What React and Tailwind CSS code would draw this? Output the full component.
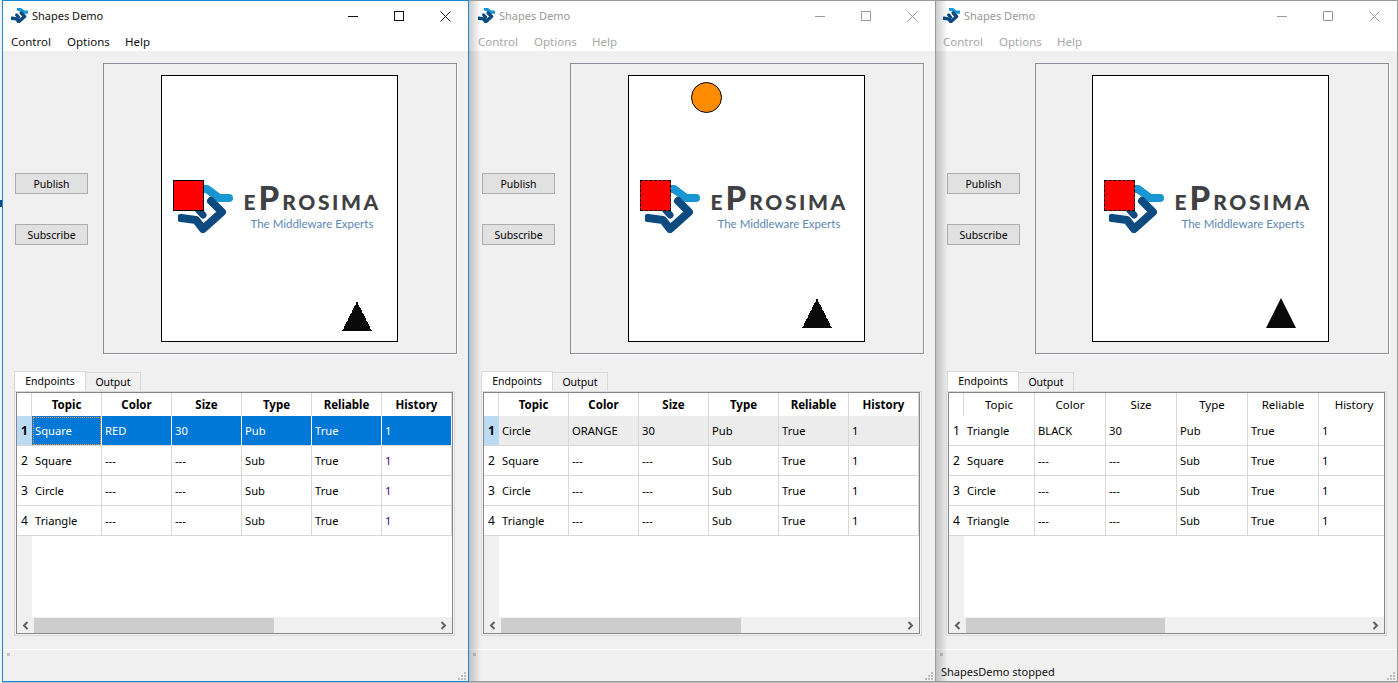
import React from "react";

const FONT = "font-['Noto_Sans','Liberation_Sans',sans-serif]";

const rowsFor = (first) => [
  { topic: first.topic, color: first.color, size: "30", type: "Pub" },
  { topic: "Square", color: "---", size: "---", type: "Sub" },
  { topic: "Circle", color: "---", size: "---", type: "Sub" },
  { topic: "Triangle", color: "---", size: "---", type: "Sub" },
];

function Mark({ className, weight = 8 }) {
  return (
    <svg viewBox="0 0 55 48" className={className} fill="none" strokeLinejoin="round" strokeLinecap="round">
      <path d="M24 4 L29 4 L41 13 L51 13" stroke="#1796d2" strokeWidth={weight} />
      <path d="M33 16 L44 27 L25 44 L18 35 L3 33" stroke="#0d4a80" strokeWidth={weight} />
      <path d="M18 22 L25 30" stroke="#0d4a80" strokeWidth={weight - 1} />
    </svg>
  );
}

function Logo() {
  return (
    <div className="flex items-center gap-[11px]">
      <Mark className="w-[55px] h-[48px] shrink-0" />
      <div className="flex flex-col w-[138px] mb-[3px]">
        <div className="flex items-baseline -mt-[3px] font-['Lato',sans-serif] font-black text-[#3f4144] h-[27px] leading-none whitespace-nowrap">
          <span className="text-[21px]">E</span>
          <span className="text-[33px] ml-[3px]">P</span>
          <span className="text-[21px] tracking-[2.6px] ml-[3px]">ROSIMA</span>
        </div>
        <div className="font-['Lato',sans-serif] text-[11.5px] leading-[14px] mt-[9px] text-[#5b87b3] ml-[7px] whitespace-nowrap">
          The Middleware Experts
        </div>
      </div>
    </div>
  );
}

function Triangle({ jagged }) {
  return (
    <svg viewBox="0 0 30 30" className="w-[30px] h-[30px]" shapeRendering={jagged ? "crispEdges" : "geometricPrecision"}>
      <polygon
        points="15,0 30,30 0,30"
        fill="#0a0a0a"
        stroke={jagged ? "#ffffff" : "none"}
        strokeWidth={jagged ? 1 : 0}
        strokeDasharray={jagged ? "1 2" : undefined}
      />
    </svg>
  );
}

function Chevron({ dir, stroke }) {
  return (
    <svg viewBox="0 0 7 9" className="w-[7px] h-[9px]" fill="none" stroke={stroke} strokeWidth="2">
      <path d={dir === "left" ? "M5.5 1 L2 4.5 L5.5 8" : "M1.5 1 L5 4.5 L1.5 8"} />
    </svg>
  );
}

function Grip() {
  const pts = [[6, 0], [3, 3], [6, 3], [0, 6], [3, 6], [6, 6]];
  return (
    <svg viewBox="0 0 8 8" className="w-[8px] h-[8px]" fill="#bdbdbd">
      {pts.map(([x, y]) => (
        <rect key={`${x}-${y}`} x={x} y={y} width="2" height="2" />
      ))}
    </svg>
  );
}

function Canvas({ shapes, pad }) {
  return (
    <div className={`w-[354px] h-[291px] border border-[#8c8c94] shadow-[1px_1px_0_#ffffff] py-[11px] ${pad}`}>
      <div className="relative w-[237px] h-[267px] bg-white border border-black flex items-center justify-center">
        <Logo />
        {shapes}
      </div>
    </div>
  );
}

function Table({ first, mode, thumb, col }) {
  const rows = rowsFor(first);
  const headers = ["Topic", "Color", "Size", "Type", "Reliable", "History"];
  const bold = mode !== "none";
  return (
    <div className="flex flex-col h-full text-[11.2px] bg-white border border-[#85858b] overflow-hidden">
      <div className="flex h-[23px] shrink-0">
        <div className="w-[15px] shrink-0 border-r border-[#d8d8d8]" />
        {headers.map((h) => (
          <div
            key={h}
            className={`${col} shrink-0 border-r border-[#d8d8d8] flex items-center justify-center text-[11.5px] ${bold ? "font-bold" : ""}`}
          >
            {h}
          </div>
        ))}
      </div>
      {rows.map((r, i) => {
        const sel = i === 0 && mode !== "none";
        const blue = i === 0 && mode === "active";
        const grey = i === 0 && mode === "inactive";
        const cells = [r.topic, r.color, r.size, r.type, "True", "1"];
        return (
          <div key={i} className="flex h-[30px] shrink-0">
            <div
              className={`w-[15px] shrink-0 flex items-center justify-center text-[12px] border-b border-[#d8d8d8] ${sel ? "bg-[#bcdaf2] font-bold" : "bg-white"}`}
            >
              {i + 1}
            </div>
            {cells.map((c, j) => (
              <div
                key={j}
                className={`${col} shrink-0 flex items-center pl-[3px] border-b border-r whitespace-nowrap ${
                  blue
                    ? "bg-[#0078d7] text-white border-b-[#d8d8d8] border-r-white"
                    : grey
                      ? "bg-[#ececec] border-[#d8d8d8]"
                      : "border-[#d8d8d8]"
                } ${blue && j === 0 ? "outline-1 outline-dotted outline-[#ff9a30] -outline-offset-2" : ""} ${
                  mode === "active" && !blue && j === 5 ? "text-[#4b0082]" : ""
                }`}
              >
                {c}
              </div>
            ))}
          </div>
        );
      })}
      <div className="flex-1 flex min-h-0">
        <div className="w-[15px] shrink-0 bg-[#f0f0f0]" />
      </div>
      <div className="h-[16px] shrink-0 bg-[#f0f0f0] flex items-center">
        <div className="w-[17px] flex justify-center shrink-0">
          <Chevron dir="left" stroke="#606060" />
        </div>
        <div className={`h-[15px] bg-[#cdcdcd] ${thumb}`} />
        <div className="flex-1" />
        <div className="w-[17px] flex justify-center shrink-0">
          <Chevron dir="right" stroke="#606060" />
        </div>
      </div>
    </div>
  );
}

function TitleButtons({ stroke }) {
  return (
    <div className="flex shrink-0 self-start h-[30px]">
      <div className="w-[46px] flex items-center justify-center">
        <svg viewBox="0 0 10 10" className="w-[10px] h-[10px]" stroke={stroke} fill="none"><path d="M0 5.5 H10" /></svg>
      </div>
      <div className="w-[46px] flex items-center justify-center">
        <svg viewBox="0 0 10 10" className="w-[10px] h-[10px]" stroke={stroke} fill="none"><rect x="0.5" y="0.5" width="9" height="9" /></svg>
      </div>
      <div className="w-[46px] flex items-center justify-center">
        <svg viewBox="0 0 11 11" className="w-[11px] h-[11px]" stroke={stroke} fill="none"><path d="M0.5 0.5 L10.5 10.5 M10.5 0.5 L0.5 10.5" /></svg>
      </div>
    </div>
  );
}

function Window({ active, width, frame, barPad, padLeft, tabPad, tabShift, canvasPad, paneWidth, col, shapes, first, mode, thumb, status, shadow }) {
  const titleColor = active ? "text-[#111111]" : "text-[#999999]";
  const menuColor = active ? "text-[#111111]" : "text-[#a6a6a6]";
  return (
    <div className={`relative h-[682px] shrink-0 flex flex-col bg-[#f0f0f0] ${width} ${frame}`}>
      <div className="h-[50px] bg-white shrink-0 flex flex-col">
        <div className="flex h-[30px]">
          <div className={`flex-1 flex items-center ${barPad}`}>
            <Mark className="w-[17px] h-[15px] -mt-[1px]" weight={11} />
            <span className={`ml-[4px] -mt-[2px] ${titleColor}`}>Shapes Demo</span>
          </div>
          <TitleButtons stroke={active ? "#111111" : "#9a9a9a"} />
        </div>
        <div className={`flex h-[20px] pt-[2px] items-center text-[11.5px] ${menuColor} ${barPad}`}>
          <span className="w-[56px]">Control</span>
          <span className="w-[58px]">Options</span>
          <span>Help</span>
        </div>
      </div>
      <div className={`flex items-start mt-[12px] shrink-0 ${padLeft}`}>
        <div className="w-[73px] shrink-0 flex flex-col gap-[30px] mt-[110px] text-[10.5px]">
          <div className="h-[21px] pt-px bg-[#e1e1e1] border border-[#adadad] flex items-center justify-center">Publish</div>
          <div className="h-[21px] pt-px bg-[#e1e1e1] border border-[#adadad] flex items-center justify-center">Subscribe</div>
        </div>
        <div className="ml-[15px]">
          <Canvas shapes={shapes} pad={canvasPad} />
        </div>
      </div>
      <div className={`flex flex-col mt-[17px] shrink-0 ${tabPad}`}>
        <div className={`flex items-end h-[20px] text-[10.5px] ${tabShift}`}>
          <div className="w-[72px] h-[20px] bg-white border border-b-0 border-[#d9d9d9] flex items-center justify-center">Endpoints</div>
          <div className="w-[55px] h-[19px] bg-[#f0f0f0] border border-l-0 border-b-0 border-[#d9d9d9] flex items-center justify-center">Output</div>
        </div>
        <div className={`h-[245px] border border-[#d9d9d9] bg-[#f5f5f5] px-px pb-px ${paneWidth}`}>
          <Table first={first} mode={mode} thumb={thumb} col={col} />
        </div>
      </div>
      <div className="mt-[13px] h-px bg-white shrink-0" />
      <div className="flex-1 relative flex items-end pl-[5px]">
        <div className="w-[3px] h-[3px] bg-[#c4c4c4] absolute left-[4px] top-[3px]" />
        <span className="leading-[19px] text-[#111111]">{status}</span>
        <div className="absolute right-[2px] bottom-[1px]">
          <Grip />
        </div>
      </div>
      {shadow && <div className="absolute left-0 top-0 bottom-0 w-[12px] bg-linear-to-r from-black/20 to-transparent" />}
    </div>
  );
}

function Shapes({ square, sq, circle, tri, jagged }) {
  return (
    <>
      {circle && (
        <div className={`absolute w-[31px] h-[31px] rounded-full bg-[#ff8c00] border border-black ${circle}`} />
      )}
      <div className={`absolute w-[31px] h-[31px] bg-[#ff0000] border border-black ${sq} ${square}`} />
      <div className={`absolute ${tri}`}>
        <Triangle jagged={jagged} />
      </div>
    </>
  );
}

export default function App() {
  return (
    <div className={`${FONT} text-[11px] leading-none text-black w-[1398px] h-[683px] overflow-hidden flex bg-[#bdbdbd]`}>
      <div className="w-[2px] h-full shrink-0 flex flex-col bg-[#f2f2f2]">
        <div className="h-[200px] shrink-0" />
        <div className="h-[7px] shrink-0 bg-[#0f4c81]" />
      </div>
      <Window
        active
        width="w-[467px]"
        frame="border border-[#1a86d8]"
        barPad="pl-[8px]"
        padLeft="pl-[12px]"
        tabPad="pl-[11px]"
        tabShift=""
        canvasPad="pl-[57px]"
        paneWidth="w-[441px]"
        col="w-[70px]"
        first={{ topic: "Square", color: "RED" }}
        mode="active"
        thumb="w-[240px]"
        status=""
        shapes={<Shapes sq="left-[11px] top-[104px]" square="" tri="left-[180px] top-[225px]" jagged />}
      />
      <Window
        width="w-[467px]"
        frame="border-t border-b border-r border-[#9a9a9a]"
        barPad="pl-[9px]"
        padLeft="pl-[13px]"
        tabPad="pl-[12px]"
        tabShift=""
        canvasPad="pl-[57px]"
        paneWidth="w-[441px]"
        col="w-[70px]"
        first={{ topic: "Circle", color: "ORANGE" }}
        mode="inactive"
        thumb="w-[240px]"
        status=""
        shadow
        shapes={<Shapes sq="left-[11px] top-[104px]" square="border-dashed" circle="left-[62px] top-[6px]" tri="left-[173px] top-[222px]" jagged />}
      />
      <Window
        width="w-[462px]"
        frame="border-t border-b border-r border-[#9a9a9a]"
        barPad="pl-[7px]"
        padLeft="pl-[11px]"
        tabPad="pl-[10px]"
        tabShift="ml-px"
        canvasPad="pl-[56px]"
        paneWidth="w-[441px]"
        col="w-[71px]"
        first={{ topic: "Triangle", color: "BLACK" }}
        mode="none"
        thumb="w-[199px]"
        status="ShapesDemo stopped"
        shadow
        shapes={<Shapes sq="left-[11px] top-[104px]" square="border-dashed" tri="left-[173px] top-[222px]" />}
      />
    </div>
  );
}
